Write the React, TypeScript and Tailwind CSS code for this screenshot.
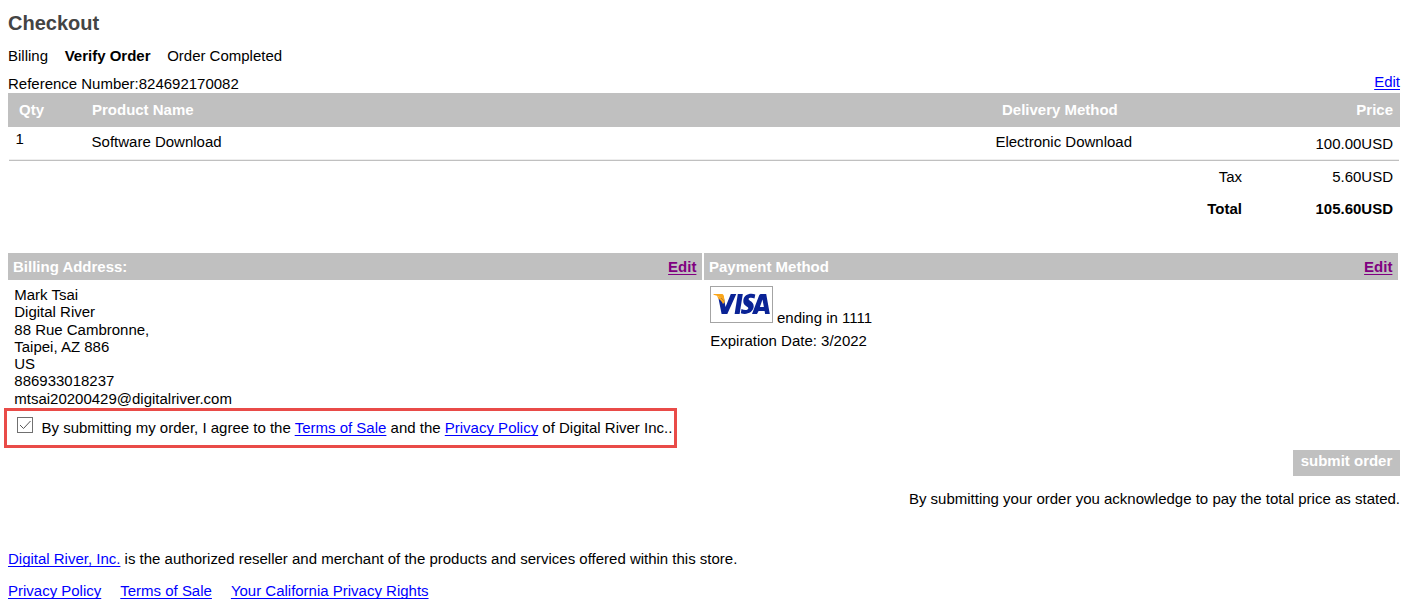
import React from "react";

const address = [
  "Mark Tsai",
  "Digital River",
  "88 Rue Cambronne,",
  "Taipei, AZ 886",
  "US",
  "886933018237",
  "mtsai20200429@digitalriver.com",
];

function Link({ children, visited = false }: { children: React.ReactNode; visited?: boolean }) {
  return (
    <a
      href="#"
      className={
        visited
          ? "text-[#800080] underline underline-offset-2 decoration-1 [text-decoration-skip-ink:none]"
          : "text-[#0000ff] underline underline-offset-2 decoration-1 [text-decoration-skip-ink:none]"
      }
    >
      {children}
    </a>
  );
}

function VisaCard() {
  return (
    <svg className="block h-[37px] w-[63px] shrink-0" viewBox="0 0 63 37" role="img" aria-label="Visa">
      <rect x="0.5" y="0.5" width="62" height="36" fill="#fff" stroke="#a4a4a4" />
      <g fill="#0a2396">
        <path d="M8.500 12.500 13.700 10.500 15.500 21 20.800 8h5.500L17.300 28h-5.700Z" />
        <path d="M27.800 8h5l-3.200 20h-5Z" />
        <path d="M45.300 8.500l-.8 4c-2.500-1.100-5.800-1.100-5.900.6 0 1.900 5.400 2.500 5.100 7.500-.3 6-7.400 8.700-12.900 6.600l.7-4.100c2.800 1.400 6.700 1.400 6.800-.8 0-2-5.200-2.300-5-7.300.2-6 6.400-8.500 12-6.500Z" />
        <path fillRule="evenodd" d="M51.300 8h4.900l3.600 20h-4.700l-.5-2.900h-6L47 28h-5l7.100-18.500c.4-1 1.100-1.500 2.200-1.500Zm1.200 5.500-2.600 7.600h4Z" />
      </g>
      <path d="M3.500 8h8c1.300 0 2 .6 2.300 1.800L14.800 16C12 12 8.500 9.500 3.500 8.700Z" fill="#faa61a" />
      <path d="M7 9.800c3.400 1.500 6 3.600 7.800 6.200L13 18C12 15.500 10 13.500 8.200 12.500Z" fill="#faa61a" />
    </svg>
  );
}

export default function App() {
  return (
    <main className="flex h-[613px] w-[1410px] flex-col overflow-hidden bg-white font-['Liberation_Sans',Arial,sans-serif] text-[14.99px] leading-[17px] text-black">
      <h1 className="ml-2 mt-3 h-[35px] text-[20px] font-bold leading-[23px] text-[#444]">Checkout</h1>
      <nav className="ml-2 flex h-[26px] gap-[16.7px]">
        <span>Billing</span>
        <b>Verify Order</b>
        <span>Order Completed</span>
      </nav>
      <div className="mx-2 mr-[10px] flex h-5 justify-between">
        <span className="pt-[2px]">Reference Number:824692170082</span>
        <Link>Edit</Link>
      </div>

      <section className="ml-2 mr-[10px]">
        <div className="grid h-[34px] grid-cols-[84px_903px_1fr_auto] bg-[#c0c0c0] pr-[7px] pt-2 font-bold text-white">
          <span className="pl-[11px]">Qty</span>
          <span>Product Name</span>
          <span className="pl-[7px]">Delivery Method</span>
          <span>Price</span>
        </div>
        <div className="mx-px grid h-[34px] grid-cols-[83px_903px_1fr_auto] border-b border-[#c0c0c0] pr-[6px] shadow-[inset_0_-1px_0_#eeeeee]">
          <span className="pl-[6.500px] pt-[3px]">1</span>
          <span className="-ml-[0.4px] pt-[6px]">Software Download</span>
          <span className="pl-[0.4px] pt-[6px]">Electronic Download</span>
          <span className="pt-2">100.00USD</span>
        </div>
        <div className="grid grid-cols-[1234px_1fr] gap-y-[15px] pr-[7px] pt-[7px] text-right">
          <span>Tax</span>
          <span>5.60USD</span>
          <b>Total</b>
          <b>105.60USD</b>
        </div>
      </section>

      <section className="ml-2 mr-3 mt-9 grid h-[155px] grid-cols-2 gap-[2px]">
        <div>
          <div className="flex h-[27px] justify-between bg-[#c0c0c0] pl-[5px] pr-[5.600px] pt-[5px] font-bold text-white">
            <span>Billing Address:</span>
            <Link visited>Edit</Link>
          </div>
          <address className="pl-[6.300px] pt-[6px] not-italic leading-[17.3px]">
            {address.map((line) => (
              <div key={line}>{line}</div>
            ))}
          </address>
        </div>
        <div>
          <div className="flex h-[27px] justify-between bg-[#c0c0c0] pl-[5px] pr-[5.600px] pt-[5px] font-bold text-white">
            <span>Payment Method</span>
            <Link visited>Edit</Link>
          </div>
          <div className="flex items-end gap-1 pl-[6px] pt-[6px]">
            <VisaCard />
            <span className="-mb-[3px]">ending in 1111</span>
          </div>
          <div className="pl-[6.300px] pt-[9px]">Expiration Date: 3/2022</div>
        </div>
      </section>

      <label className="ml-1 flex h-10 w-[673px] shrink-0 border-[3px] border-[#e94b48] pl-[10px] pt-[6px]">
        <input type="checkbox" defaultChecked className="peer sr-only" />
        <svg className="mr-[8.500px] block size-4 shrink-0" viewBox="0 0 16 16" fill="none">
          <rect x="0.5" y="0.5" width="15" height="15" fill="#fff" stroke="#707070" />
          <path d="m3 8 3.500 3.500L13.500 4" stroke="#555" />
        </svg>
        <span className="whitespace-nowrap pt-[2px] text-[15px] leading-[17px]">
          By submitting my order, I agree to the <Link>Terms of Sale</Link> and the <Link>Privacy Policy</Link> of Digital River Inc..
        </span>
      </label>

      <div className="mr-[10px] mt-[2px] flex flex-col items-end">
        <button className="h-[26px] w-[107px] bg-[#c0c0c0] pb-[5px] font-bold text-white">submit order</button>
        <p className="mt-[14px] text-[15px] leading-[17px]">By submitting your order you acknowledge to pay the total price as stated.</p>
      </div>

      <footer className="ml-2 mt-[43px]">
        <p>
          <Link>Digital River, Inc.</Link> is the authorized reseller and merchant of the products and services offered within this store.
        </p>
        <nav className="mt-[15px] flex gap-[19px]">
          <Link>Privacy Policy</Link>
          <Link>Terms of Sale</Link>
          <Link>Your California Privacy Rights</Link>
        </nav>
      </footer>
    </main>
  );
}
